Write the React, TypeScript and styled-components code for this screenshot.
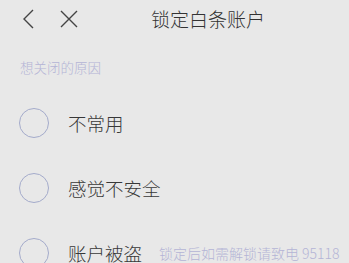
import React, { FC } from "react";
import styled, { createGlobalStyle } from "styled-components";

const GlobalStyle = createGlobalStyle`
  html, body {
    margin: 0;
    padding: 0;
    background: #e8e8e8;
  }
  body {
    font-family: "Noto Sans CJK SC", "Noto Sans", sans-serif;
  }
`;

const Page = styled.div`
  width: 349px;
  height: 263px;
  overflow: hidden;
  background: #e8e8e8;
`;

const Header = styled.div`
  display: flex;
  align-items: center;
  height: 38px;
  position: relative;
`;

const IconButton = styled.div<{ $ml: number }>`
  display: flex;
  align-items: center;
  justify-content: center;
  margin-left: ${(p) => p.$ml}px;
  width: 20px;
  height: 20px;
`;

const Title = styled.div`
  position: absolute;
  left: 151px;
  top: 6px;
  font-size: 19px;
  line-height: 26px;
  font-weight: 300;
  color: #333;
`;

const Label = styled.div`
  margin: 20px 0 0 20px;
  font-size: 13.5px;
  line-height: 18px;
  font-weight: 300;
  color: #b4b4d6;
`;

const List = styled.div`
  display: flex;
  flex-direction: column;
  margin-top: 32px;
  gap: 35px;
`;

const Row = styled.div`
  display: flex;
  align-items: center;
  height: 30px;
  padding-left: 19px;
`;

const Radio = styled.div`
  width: 28px;
  height: 28px;
  border: 1px solid #a4abcb;
  border-radius: 50%;
  flex-shrink: 0;
`;

const Reason = styled.div`
  margin-left: 19px;
  font-size: 18.5px;
  font-weight: 300;
  color: #383838;
`;

const Hint = styled.div`
  margin-left: 17px;
  font-size: 14px;
  font-weight: 300;
  color: #b4b4d6;
`;

const reasons = ["不常用", "感觉不安全", "账户被盗"];

const App: FC = () => {
  return (
    <Page>
      <GlobalStyle />
      <Header>
        <IconButton $ml={19}>
          <svg width="20" height="20" viewBox="0 0 20 20" fill="none">
            <path d="M14 1 L5 10 L14 19" stroke="#444" strokeWidth="1.4" />
          </svg>
        </IconButton>
        <IconButton $ml={20}>
          <svg width="20" height="20" viewBox="0 0 20 20" fill="none">
            <path d="M2 2 L18 18 M18 2 L2 18" stroke="#444" strokeWidth="1.4" />
          </svg>
        </IconButton>
        <Title>锁定白条账户</Title>
      </Header>
      <Label>想关闭的原因</Label>
      <List>
        {reasons.map((r, i) => (
          <Row key={r}>
            <Radio />
            <Reason>{r}</Reason>
            {i === reasons.length - 1 && <Hint>锁定后如需解锁请致电 95118</Hint>}
          </Row>
        ))}
      </List>
    </Page>
  );
};

export default App;
